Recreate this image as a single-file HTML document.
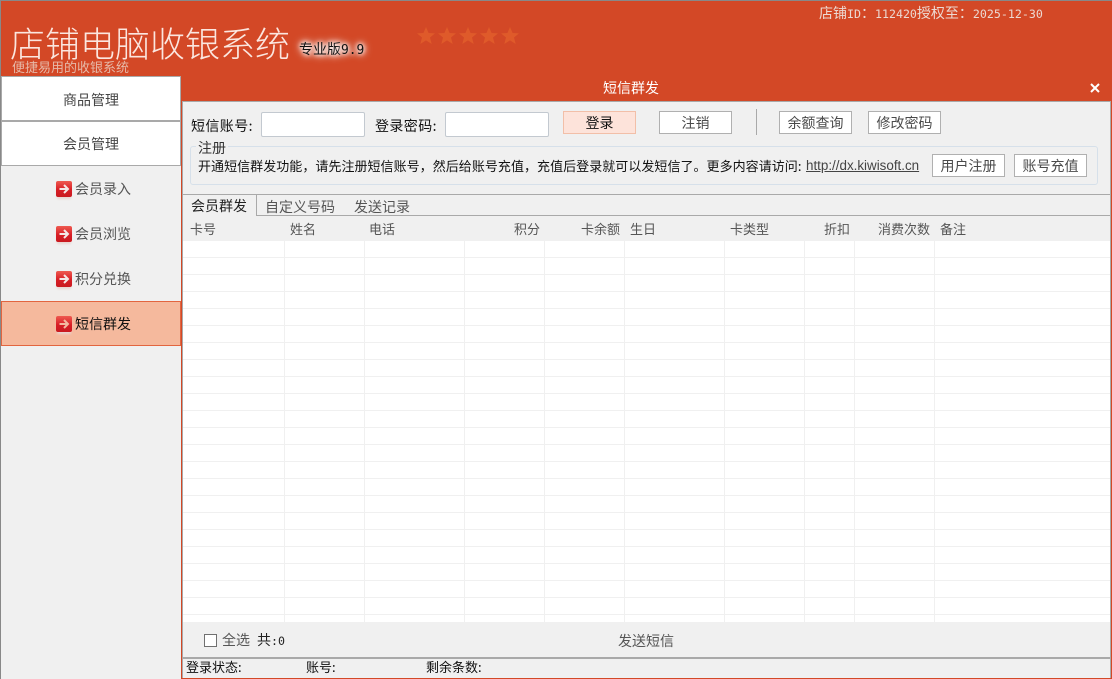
<!DOCTYPE html>
<html><head><meta charset="utf-8">
<style>
*{box-sizing:border-box;margin:0;padding:0}
html,body{width:1112px;height:679px;overflow:hidden;background:#d34826}
body{position:relative;font-family:"WenQuanYi Zen Hei","Noto Sans CJK SC",sans-serif;font-size:14px;color:#333}
.a{position:absolute;white-space:nowrap}
.m{font-family:"DejaVu Sans Mono",monospace;font-size:11.62px}
.btn{position:absolute;background:#fff;border:1px solid #b0b0b0;text-align:center;color:#4a4a4a;font-size:14px;height:23px;line-height:23px}
.in{position:absolute;background:#fff;border:1px solid #c3c9d0;border-radius:2px;width:104px;height:25px;top:112px}
.nav{position:absolute;left:1px;width:180px;height:45px;text-align:center;color:#444}
.sub{position:absolute;left:1px;width:180px;height:45px;color:#555}
.sub span{position:absolute;left:74px;top:1px;line-height:45px}
.sub i{position:absolute;left:55px;top:15px;width:16px;height:16px;border-radius:2px;background:linear-gradient(#ee5a50,#d81e26 55%,#c91a20);box-shadow:0 3px 2px -1px #e8d4d0}
.sub svg{position:absolute}
.th{position:absolute;top:221px;font-size:13px;color:#555;line-height:16px}
.st{position:absolute;top:659px;font-size:13px;line-height:16px;color:#111}
</style></head><body>
<div class="a" style="left:0;top:0;width:1112px;height:1px;background:#888"></div>
<div class="a" style="left:0;top:0;width:1px;height:679px;background:#888"></div>

<div class="a" style="left:10px;top:20px;font-size:35px;line-height:46px;color:#fbe6df;font-weight:300;font-family:'Noto Sans CJK SC',sans-serif">店铺电脑收银系统</div>
<div class="a" style="left:12px;top:59px;font-size:13px;line-height:16px;color:#e6b9a8">便捷易用的收银系统</div>
<div class="a" style="left:299px;top:40px;font-size:14px;line-height:18px;color:#111;text-shadow:0 0 4px #fff,0 0 6px #fff,0 0 8px #fff,0 0 10px #fff">专业版<span style="font-family:'DejaVu Sans Mono',monospace;font-size:12.9px">9.9</span></div>
<svg class="a" style="left:416px;top:26px" width="106" height="20" viewBox="0 0 106 20">
<g fill="#df5a2a">
<polygon points="10,1 12.6,7 19,7.4 14,11.5 15.7,18 10,14.4 4.3,18 6,11.5 1,7.4 7.4,7"/>
<polygon transform="translate(21 0)" points="10,1 12.6,7 19,7.4 14,11.5 15.7,18 10,14.4 4.3,18 6,11.5 1,7.4 7.4,7"/>
<polygon transform="translate(42 0)" points="10,1 12.6,7 19,7.4 14,11.5 15.7,18 10,14.4 4.3,18 6,11.5 1,7.4 7.4,7"/>
<polygon transform="translate(63 0)" points="10,1 12.6,7 19,7.4 14,11.5 15.7,18 10,14.4 4.3,18 6,11.5 1,7.4 7.4,7"/>
<polygon transform="translate(84 0)" points="10,1 12.6,7 19,7.4 14,11.5 15.7,18 10,14.4 4.3,18 6,11.5 1,7.4 7.4,7"/>
</g></svg>
<div class="a" style="left:819px;top:5px;font-size:14px;line-height:17px;color:#ecd9d2">店铺<span class="m">ID</span>：<span class="m">112420</span>授权至：<span class="m">2025-12-30</span></div>

<div class="a" style="left:603px;top:79px;font-size:14px;line-height:18px;color:#fff">短信群发</div>
<svg class="a" style="left:1089px;top:82px" width="12" height="12" viewBox="0 0 12 12"><path d="M2 2L10 10M10 2L2 10" stroke="#fff" stroke-width="2"/></svg>

<!-- sidebar -->
<div class="a" style="left:1px;top:76px;width:180px;height:603px;background:#f0f0f0"></div>
<div class="nav" style="top:76px;background:#fff;border:1px solid #a9a9a9;line-height:47px">商品管理</div>
<div class="nav" style="top:121px;background:#fff;border:1px solid #a9a9a9;line-height:45px">会员管理</div>
<div class="sub" style="top:166px"><i></i><svg style="left:55px;top:15px" width="16" height="16" viewBox="0 0 16 16"><path d="M3.5 8H11.5M8 4L12 8L8 12" fill="none" stroke="#f4e8e6" stroke-width="2"/></svg><span>会员录入</span></div>
<div class="sub" style="top:211px"><i></i><svg style="left:55px;top:15px" width="16" height="16" viewBox="0 0 16 16"><path d="M3.5 8H11.5M8 4L12 8L8 12" fill="none" stroke="#f4e8e6" stroke-width="2"/></svg><span>会员浏览</span></div>
<div class="sub" style="top:256px"><i></i><svg style="left:55px;top:15px" width="16" height="16" viewBox="0 0 16 16"><path d="M3.5 8H11.5M8 4L12 8L8 12" fill="none" stroke="#f4e8e6" stroke-width="2"/></svg><span>积分兑换</span></div>
<div class="sub" style="top:301px;background:#f5b99d;border:1px solid #e2653f;color:#111"><i style="left:54px;top:14px"></i><svg style="left:54px;top:14px" width="16" height="16" viewBox="0 0 16 16"><path d="M3.5 8H11.5M8 4L12 8L8 12" fill="none" stroke="#f3b9a0" stroke-width="2"/></svg><span style="left:73px;top:0">短信群发</span></div>

<!-- main -->
<div class="a" style="left:182px;top:101px;width:929px;height:577px;background:#f0f0f0;border-left:1px solid #a9a9a9;border-top:1px solid #a9a9a9;border-right:1px solid #a9a9a9"></div>

<div class="a" style="left:191px;top:117px;line-height:18px;color:#111;letter-spacing:.4px">短信账号:</div>
<div class="in" style="left:261px"></div>
<div class="a" style="left:375px;top:117px;line-height:18px;color:#111;letter-spacing:.4px">登录密码:</div>
<div class="in" style="left:445px"></div>
<div class="btn" style="left:563px;top:111px;width:73px;background:#fde3da;border-color:#f2bfa8;color:#111">登录</div>
<div class="btn" style="left:659px;top:111px;width:73px">注销</div>
<div class="a" style="left:756px;top:109px;width:1px;height:26px;background:#a9a9a9"></div>
<div class="btn" style="left:779px;top:111px;width:73px">余额查询</div>
<div class="btn" style="left:868px;top:111px;width:73px">修改密码</div>

<div class="a" style="left:190px;top:146px;width:908px;height:39px;border:1px solid #d6e0ea;border-radius:3px"></div>
<div class="a" style="left:196px;top:140px;background:#f0f0f0;padding:0 2px;line-height:17px;color:#333">注册</div>
<div class="a" style="left:198px;top:157px;font-size:13px;line-height:17px;color:#111;letter-spacing:.04px">开通短信群发功能，请先注册短信账号，然后给账号充值，充值后登录就可以发短信了。更多内容请访问:</div>
<div class="a" style="left:806px;top:157px;font-size:13.4px;line-height:17px;color:#444;text-decoration:underline;font-family:'Liberation Sans',sans-serif">http://dx.kiwisoft.cn</div>
<div class="btn" style="left:932px;top:154px;width:73px">用户注册</div>
<div class="btn" style="left:1014px;top:154px;width:73px">账号充值</div>

<div class="a" style="left:183px;top:194px;width:927px;height:1px;background:#a9a9a9"></div>
<div class="a" style="left:183px;top:215px;width:927px;height:1px;background:#a9a9a9"></div>
<div class="a" style="left:183px;top:195px;width:74px;height:21px;background:#f0f0f0;border-right:1px solid #a9a9a9"></div>
<div class="a" style="left:191px;top:197px;line-height:18px;color:#222">会员群发</div>
<div class="a" style="left:265px;top:198px;line-height:18px;color:#555">自定义号码</div>
<div class="a" style="left:354px;top:198px;line-height:18px;color:#555">发送记录</div>

<div class="th" style="left:190px">卡号</div>
<div class="th" style="left:290px">姓名</div>
<div class="th" style="left:369px">电话</div>
<div class="th" style="left:514px">积分</div>
<div class="th" style="left:581px">卡余额</div>
<div class="th" style="left:630px">生日</div>
<div class="th" style="left:730px">卡类型</div>
<div class="th" style="left:824px">折扣</div>
<div class="th" style="left:878px">消费次数</div>
<div class="th" style="left:940px">备注</div>

<div class="a" style="left:183px;top:241px;width:927px;height:381px;background:#fff">
<svg width="927" height="381" style="display:block">
<g stroke="#f0f0f0" stroke-width="1">
<path d="M101.500 0V381M181.500 0V381M281.500 0V381M361.500 0V381M441.500 0V381M541.500 0V381M621.500 0V381M671.500 0V381M751.500 0V381"/>
<path d="M0 16.500H927M0 33.500H927M0 50.500H927M0 67.500H927M0 84.500H927M0 101.500H927M0 118.500H927M0 135.500H927M0 152.500H927M0 169.500H927M0 186.500H927M0 203.500H927M0 220.500H927M0 237.500H927M0 254.500H927M0 271.500H927M0 288.500H927M0 305.500H927M0 322.500H927M0 339.500H927M0 356.500H927M0 373.500H927"/>
</g></svg>
</div>

<div class="a" style="left:204px;top:634px;width:13px;height:13px;background:#fff;border:1px solid #707070"></div>
<div class="a" style="left:222px;top:632px;line-height:17px;color:#555">全选</div>
<div class="a" style="left:257px;top:632px;line-height:17px;color:#222">共<span class="m">:0</span></div>
<div class="a" style="left:618px;top:633px;line-height:17px;color:#555">发送短信</div>

<div class="a" style="left:183px;top:657px;width:927px;height:2px;background:#a9a9a9"></div>
<div class="st" style="left:186px">登录状态:</div>
<div class="st" style="left:306px">账号:</div>
<div class="st" style="left:426px">剩余条数:</div>
<div class="a" style="left:182px;top:678px;width:930px;height:1px;background:#d34826"></div>
<div class="a" style="left:181px;top:101px;width:1px;height:578px;background:#d34826"></div>
<div class="a" style="left:1111px;top:101px;width:1px;height:578px;background:#d34826"></div>
</body></html>
